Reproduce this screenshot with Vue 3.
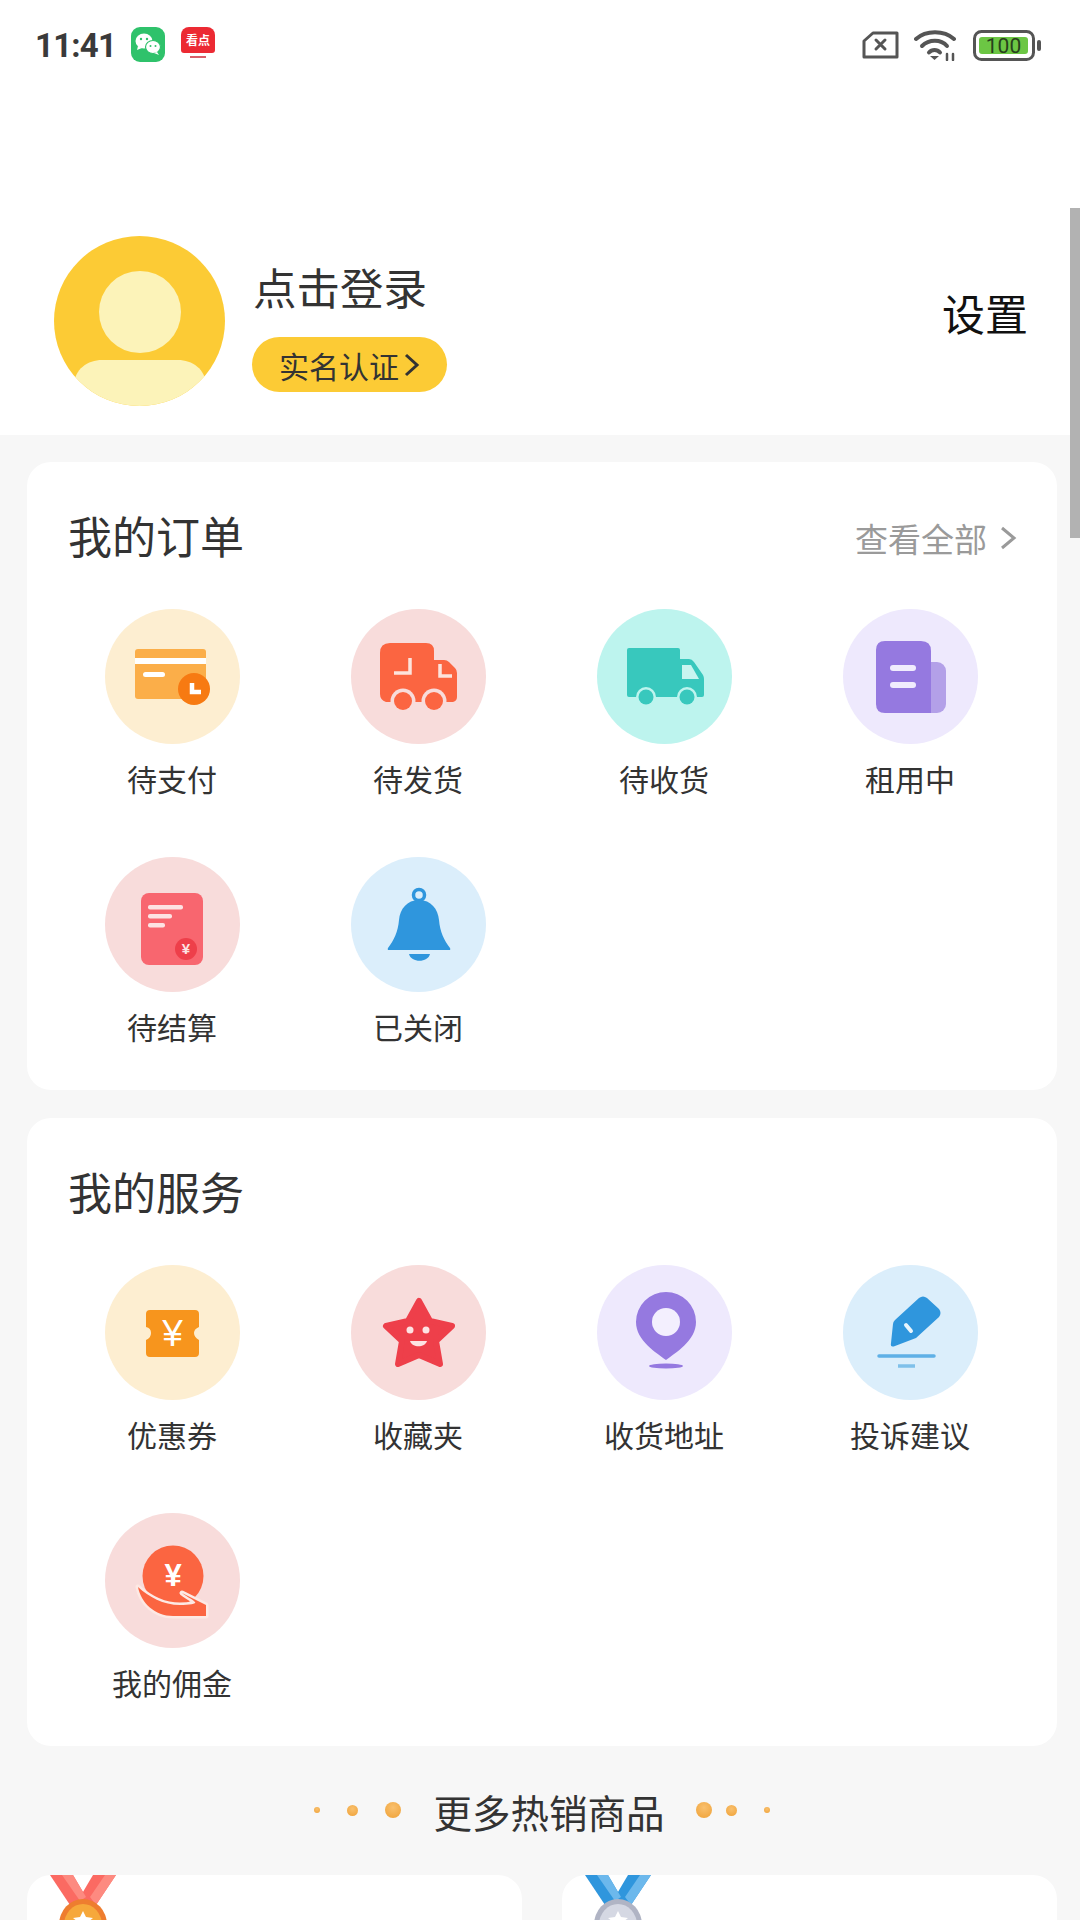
<template>
  <div class="page">
    <div class="status">
      <span class="time">11:41</span>
      <svg class="wechat" width="34" height="35" viewBox="0 0 34 35">
        <rect width="34" height="35" rx="9" fill="#2fc26b" />
        <ellipse cx="13" cy="14" rx="8.500" ry="7.500" fill="#fff" />
        <path d="M7 19l-1 4 5-2z" fill="#fff" />
        <ellipse cx="22" cy="20" rx="7.500" ry="6.500" fill="#fff" stroke="#2fc26b" stroke-width="1.200" />
        <path d="M26 25l2 3-5-2z" fill="#fff" />
        <circle cx="10" cy="12" r="1.200" fill="#2fc26b" />
        <circle cx="16" cy="12" r="1.200" fill="#2fc26b" />
        <circle cx="19.500" cy="19" r="1" fill="#2fc26b" />
        <circle cx="24.500" cy="19" r="1" fill="#2fc26b" />
      </svg>
      <div class="kandian">
        <div class="kd-top">看点</div>
        <div class="kd-bottom"></div>
      </div>
      <div class="status-right">
        <svg width="37" height="28" viewBox="0 0 37 28" fill="none" stroke="#555" stroke-width="3" stroke-linejoin="round" stroke-linecap="round">
          <path d="M11 2H35V26H2V10z" />
          <path d="M14 9l9 9M23 9l-9 9" />
        </svg>
        <svg class="wifi" width="42" height="31" viewBox="0 0 42 31" fill="none" stroke="#555" stroke-linecap="round">
          <path d="M2 9C12 0 30 0 40 9" stroke-width="4" />
          <path d="M8 16C15 9 27 9 33 16" stroke-width="4" />
          <path d="M15 22.500C18 19 23 19 26 22.500" stroke-width="4" />
          <path d="M16 26h9l-4.500 4z" fill="#555" stroke="none" />
          <path d="M33 24v6M39 24v6" stroke-width="2.500" />
        </svg>
        <svg width="68" height="31" viewBox="0 0 68 31">
          <rect x="1.500" y="1.500" width="59" height="28" rx="7" fill="#fff" stroke="#555" stroke-width="3" />
          <rect x="6" y="7" width="49" height="17" rx="3" fill="#6cc644" />
          <text x="30.500" y="23" text-anchor="middle" class="batt">100</text>
          <rect x="64" y="10" width="4" height="11" rx="2" fill="#555" />
        </svg>
      </div>
    </div>

    <div class="header">
      <svg class="avatar" width="171" height="170" viewBox="0 0 171 170">
        <clipPath id="avatarClip"><ellipse cx="85.500" cy="85" rx="85.500" ry="85" /></clipPath>
        <g clip-path="url(#avatarClip)">
          <rect width="171" height="170" fill="#fccb35" />
          <circle cx="86" cy="76" r="41" fill="#fcf3b9" />
          <path d="M20 150C20 133 34 124 48 124H124C138 124 152 133 152 150V175H20z" fill="#fcf3b9" />
        </g>
      </svg>
      <div class="user">
        <div class="login">点击登录</div>
        <div class="verify">实名认证
          <svg width="16" height="26" viewBox="0 0 16 26" fill="none" stroke="#333" stroke-width="3">
            <path d="M2 3l11 10L2 23" />
          </svg>
        </div>
      </div>
      <div class="setting">设置</div>
    </div>

    <div class="main">
      <section class="card">
        <div class="card-head">
          <h2>我的订单</h2>
          <div class="more">查看全部
            <svg width="18" height="26" viewBox="0 0 18 26" fill="none" stroke="#9a9a9a" stroke-width="3">
              <path d="M3 3l12 10L3 23" />
            </svg>
          </div>
        </div>
        <div class="grid">
          <div class="item">
            <svg class="ico" viewBox="0 0 135 135">
              <circle cx="67.500" cy="67.500" r="67.500" fill="#fdeed1" />
              <rect x="30" y="40" width="71" height="50" rx="3" fill="#fbae49" />
              <rect x="30" y="49" width="71" height="6" fill="#fff" />
              <rect x="38" y="63" width="22" height="5" rx="2.500" fill="#fff" />
              <circle cx="89" cy="80" r="16" fill="#f77a12" />
              <path d="M87 74v9h9" fill="none" stroke="#fff" stroke-width="4.500" />
            </svg>
            <div class="label">待支付</div>
          </div>
          <div class="item">
            <svg class="ico" viewBox="0 0 135 135">
              <circle cx="67.500" cy="67.500" r="67.500" fill="#f8dcdb" />
              <path d="M39 34H75Q83 34 83 42V51H93Q96 51 98 53L104 59Q106 61 106 64V88Q106 92 102 93H35Q29 91 29 85V44Q29 34 39 34Z" fill="#fb6541" />
              <circle cx="52" cy="92" r="12.500" fill="#f8dcdb" />
              <circle cx="83" cy="92" r="12.500" fill="#f8dcdb" />
              <circle cx="52" cy="92" r="9" fill="#fb6541" />
              <circle cx="83" cy="92" r="9" fill="#fb6541" />
              <path d="M59 49v15H43M89 55v12h12" fill="none" stroke="#fde3dc" stroke-width="3.500" />
            </svg>
            <div class="label">待发货</div>
          </div>
          <div class="item">
            <svg class="ico" viewBox="0 0 135 135">
              <circle cx="67.500" cy="67.500" r="67.500" fill="#bdf4ee" />
              <path d="M32 39H81Q83 39 83 41V50H92Q95 50 97 53L106 66Q107 68 107 70V86Q107 88 105 88H32Q30 88 30 86V41Q30 39 32 39Z" fill="#38c8bd" />
              <path d="M85 56H94L102 70H85z" fill="#c9f5f0" />
              <circle cx="49" cy="88" r="10" fill="#bdf4ee" />
              <circle cx="90" cy="88" r="10" fill="#bdf4ee" />
              <circle cx="49" cy="88" r="7.500" fill="#38c8bd" />
              <circle cx="90" cy="88" r="7.500" fill="#38c8bd" />
            </svg>
            <div class="label">待收货</div>
          </div>
          <div class="item">
            <svg class="ico" viewBox="0 0 135 135">
              <circle cx="67.500" cy="67.500" r="67.500" fill="#eee9fd" />
              <rect x="70" y="53" width="33" height="51" rx="9" fill="#b3a0e8" />
              <path d="M42 32H78Q88 32 88 42V104H42Q33 104 33 95V41Q33 32 42 32Z" fill="#9579e0" />
              <rect x="47" y="56" width="26" height="6" rx="3" fill="#f0ecfd" />
              <rect x="47" y="73" width="26" height="6" rx="3" fill="#f0ecfd" />
            </svg>
            <div class="label">租用中</div>
          </div>
          <div class="item">
            <svg class="ico" viewBox="0 0 135 135">
              <circle cx="67.500" cy="67.500" r="67.500" fill="#f8dcdb" />
              <rect x="36" y="36" width="62" height="72" rx="8" fill="#f8666f" />
              <rect x="43" y="48" width="35" height="4.500" rx="2" fill="#fde3e3" />
              <rect x="43" y="57" width="24" height="4.500" rx="2" fill="#fde3e3" />
              <rect x="43" y="66" width="17" height="4.500" rx="2" fill="#fde3e3" />
              <circle cx="81" cy="92" r="11" fill="#ee3f4a" />
              <text x="81" y="97" text-anchor="middle" class="yen-small">¥</text>
            </svg>
            <div class="label">待结算</div>
          </div>
          <div class="item">
            <svg class="ico" viewBox="0 0 135 135">
              <circle cx="67.500" cy="67.500" r="67.500" fill="#dbeefb" />
              <circle cx="68" cy="38" r="5.500" fill="#dbeefb" stroke="#2f96dd" stroke-width="3.500" />
              <path d="M68 43C56 43 49 52 48 63C47 75 43 83 37 91Q36 93 38 93H98Q100 93 99 91C93 83 89 75 88 63C87 52 80 43 68 43Z" fill="#2f96dd" />
              <path d="M58 97H79C77 106 60 106 58 97Z" fill="#2f96dd" />
            </svg>
            <div class="label">已关闭</div>
          </div>
        </div>
      </section>

      <section class="card">
        <div class="card-head">
          <h2>我的服务</h2>
        </div>
        <div class="grid">
          <div class="item">
            <svg class="ico" viewBox="0 0 135 135">
              <circle cx="67.500" cy="67.500" r="67.500" fill="#fdeed1" />
              <path d="M45 45H90Q94 45 94 49V62Q89 64 89 68T94 75V88Q94 92 90 92H45Q41 92 41 88V75Q46 73 46 68T41 62V49Q41 45 45 45Z" fill="#f7951d" />
              <text x="67.500" y="81" text-anchor="middle" class="yen-big">¥</text>
            </svg>
            <div class="label">优惠券</div>
          </div>
          <div class="item">
            <svg class="ico" viewBox="0 0 135 135">
              <circle cx="67.500" cy="67.500" r="67.500" fill="#f8dcdb" />
              <path d="M68 36L79 56L101 61L85 76L89 99L68 90L47 99L51 76L35 61L57 56Z" fill="#ee3f4a" stroke="#ee3f4a" stroke-width="6" stroke-linejoin="round" />
              <circle cx="59" cy="65" r="3.500" fill="#fde3e3" />
              <circle cx="75" cy="65" r="3.500" fill="#fde3e3" />
              <path d="M59 76H76C74 83 61 83 59 76Z" fill="#fde3e3" />
            </svg>
            <div class="label">收藏夹</div>
          </div>
          <div class="item">
            <svg class="ico" viewBox="0 0 135 135">
              <circle cx="67.500" cy="67.500" r="67.500" fill="#eee9fd" />
              <path d="M69 95C60 88 39 76 39 57A30 30 0 0 1 99 57C99 76 78 88 69 95Z" fill="#9579e0" />
              <circle cx="69" cy="57" r="14" fill="#f3effe" />
              <ellipse cx="69" cy="101" rx="17" ry="2.500" fill="#9579e0" />
            </svg>
            <div class="label">收货地址</div>
          </div>
          <div class="item">
            <svg class="ico" viewBox="0 0 135 135">
              <circle cx="67.500" cy="67.500" r="67.500" fill="#dbeefb" />
              <path d="M76 33Q80 30 84 33L96 44Q99 48 96 52L73 73L52 81Q47 83 48 78L50 59Q50 57 52 55Z" fill="#2f96dd" />
              <path d="M63 60l5 6" stroke="#e8f5fd" stroke-width="4" stroke-linecap="round" />
              <path d="M36 91H91" stroke="#5fb0e6" stroke-width="3.500" stroke-linecap="round" />
              <path d="M55 101H72" stroke="#7fc0ea" stroke-width="3.500" />
            </svg>
            <div class="label">投诉建议</div>
          </div>
          <div class="item">
            <svg class="ico" viewBox="0 0 135 135">
              <circle cx="67.500" cy="67.500" r="67.500" fill="#f8dcdb" />
              <circle cx="68" cy="63" r="30.500" fill="#fb6541" />
              <text x="68" y="73" text-anchor="middle" class="yen-coin">¥</text>
              <path d="M33 74C44 84 58 92 75 92C84 92 92 91 90 89C86 85 80 83 77 80L101 92V103H68C50 103 36 90 33 74Z" fill="#fb6541" stroke="#fde9e4" stroke-width="5" stroke-linejoin="round" paint-order="stroke" />
            </svg>
            <div class="label">我的佣金</div>
          </div>
        </div>
      </section>

      <div class="hot">
        <i class="dot small"></i>
        <i class="dot mid"></i>
        <i class="dot big"></i>
        <span class="hot-text">更多热销商品</span>
        <i class="dot big r"></i>
        <i class="dot mid r"></i>
        <i class="dot small r"></i>
      </div>

      <div class="goods">
        <div class="good">
          <svg class="medal" width="70" height="45" viewBox="0 0 70 45">
            <path d="M0 0H23L36 22L33 30H20Z" fill="#fb6a62" />
            <path d="M66 0H43L30 22L33 30H46Z" fill="#fb6a62" />
            <path d="M12 0H23L36 22L30 26Z" fill="#fd8a80" />
            <path d="M55 0H66L46 30L40 22Z" fill="#fd8a80" />
            <ellipse cx="33" cy="50" rx="24" ry="26" fill="#ee7d2f" />
            <ellipse cx="33" cy="50" rx="19" ry="21" fill="#f6a83b" />
            <path d="M33 36l3 6 7 1-5 4H28l-5-4 7-1z" fill="#fff" />
          </svg>
        </div>
        <div class="good">
          <svg class="medal" width="70" height="45" viewBox="0 0 70 45">
            <path d="M0 0H23L36 22L33 30H20Z" fill="#2f96dd" />
            <path d="M66 0H43L30 22L33 30H46Z" fill="#2f96dd" />
            <path d="M12 0H23L36 22L30 26Z" fill="#6cb8ec" />
            <path d="M55 0H66L46 30L40 22Z" fill="#6cb8ec" />
            <ellipse cx="33" cy="50" rx="24" ry="26" fill="#b0b4c4" />
            <ellipse cx="33" cy="50" rx="19" ry="21" fill="#d5d8e3" />
            <path d="M33 36l3 6 7 1-5 4H28l-5-4 7-1z" fill="#fff" />
          </svg>
        </div>
      </div>
    </div>

    <div class="scrollbar"></div>
  </div>
</template>

<script setup>
</script>

<style>
body {
  margin: 0;
  background: #f7f7f7;
}
</style>

<style scoped>
.page {
  position: relative;
  width: 1080px;
  height: 1920px;
  overflow: hidden;
  background: #f7f7f7;
  font-family: "Noto Sans CJK SC", "Noto Sans", sans-serif;
  color: #333;
}

.status {
  display: flex;
  align-items: center;
  height: 90px;
  padding: 0 39px 0 35px;
  box-sizing: border-box;
  background: #fff;
}

.time {
  font-family: Roboto, "Liberation Sans", sans-serif;
  font-size: 33px;
  font-weight: 700;
  color: #3a3a3a;
  letter-spacing: -0.800px;
  width: 96px;
}

.wechat {
  margin-bottom: 2px;
}

.kandian {
  width: 34px;
  height: 36px;
  margin-left: 16px;
  margin-bottom: 1px;
}

.kd-top {
  height: 26px;
  border-radius: 8px 8px 3px 3px;
  background: #ec2a33;
  color: #fff;
  font-size: 12px;
  font-weight: 700;
  line-height: 26px;
  text-align: center;
}

.kd-bottom {
  width: 16px;
  height: 2px;
  margin: 3px auto 0;
  background: #d8606a;
}

.status-right {
  display: flex;
  align-items: center;
  margin-left: auto;
}

.status-right svg {
  display: block;
}

.wifi {
  margin: 0 17px 0 15px;
}

.batt {
  font-family: Roboto, "Liberation Sans", sans-serif;
  font-size: 21px;
  fill: #27401c;
}

.header {
  display: flex;
  align-items: center;
  padding: 146px 52px 29px 54px;
  background: #fff;
}

.avatar {
  flex: none;
}

.user {
  margin: 10px 0 0 27px;
}

.login {
  font-size: 43.500px;
  line-height: 60px;
  margin: -3px 0 0 1px;
  color: #333;
}

.verify {
  display: flex;
  align-items: center;
  justify-content: center;
  gap: 5px;
  width: 195px;
  height: 55px;
  margin-top: 20px;
  border-radius: 28px;
  background: #fccb35;
  font-size: 30px;
  color: #333;
}

.setting {
  margin: -18px 0 0 auto;
  font-size: 43px;
  color: #111;
}

.main {
  padding: 27px 23px 0 27px;
}

.card {
  height: 628px;
  margin-bottom: 28px;
  box-sizing: border-box;
  border-radius: 24px;
  background: #fff;
}

.card-head {
  display: flex;
  align-items: center;
  justify-content: space-between;
  height: 60px;
  padding: 45px 40px 42px 41px;
}

h2 {
  margin: 0 0 4px;
  font-size: 44px;
  font-weight: 400;
  line-height: 60px;
  color: #333;
}

.more {
  display: flex;
  align-items: center;
  gap: 12px;
  font-size: 33px;
  color: #9a9a9a;
  margin-top: 2px;
}

.grid {
  display: grid;
  grid-template-columns: repeat(4, 246px);
  row-gap: 59px;
  padding: 0 22px;
}

.item {
  display: flex;
  flex-direction: column;
  align-items: center;
}

.ico {
  display: block;
  width: 135px;
  height: 135px;
}

.label {
  margin-top: 14px;
  font-size: 30px;
  line-height: 40px;
  color: #333;
  white-space: nowrap;
}

.yen-small {
  font-family: "Liberation Sans", sans-serif;
  font-size: 15px;
  font-weight: 700;
  fill: #fde3e3;
}

.yen-big {
  font-family: "Liberation Sans", sans-serif;
  font-size: 37px;
  fill: #fff;
}

.yen-coin {
  font-family: "Liberation Sans", sans-serif;
  font-size: 31px;
  font-weight: 700;
  fill: #fff;
}

.hot {
  display: flex;
  align-items: center;
  justify-content: center;
  height: 50px;
  margin-top: 41px;
}

.hot-text {
  margin: -2px 31px 0 32px;
  font-size: 38.500px;
  line-height: 50px;
  color: #333;
}

.dot {
  display: block;
  border-radius: 50%;
  background: radial-gradient(circle at 50% 35%, #f9c06e, #efa136);
  margin-bottom: 4px;
}

.dot.small {
  width: 6px;
  height: 6px;
  margin-right: 27px;
}

.dot.mid {
  width: 11px;
  height: 11px;
  margin-right: 27px;
}

.dot.big {
  width: 16px;
  height: 16px;
}

.dot.big.r {
  margin-right: 14px;
}

.dot.mid.r {
  margin-right: 27px;
}

.dot.small.r {
  margin-right: 0;
}

.goods {
  display: grid;
  grid-template-columns: 495px 495px;
  column-gap: 40px;
  margin-top: 38px;
}

.good {
  height: 240px;
  padding-left: 23px;
  border-radius: 24px;
  background: #fff;
}

.medal {
  display: block;
}

.scrollbar {
  position: absolute;
  top: 208px;
  right: 0;
  width: 10px;
  height: 330px;
  background: #b2b2b2;
}
</style>
